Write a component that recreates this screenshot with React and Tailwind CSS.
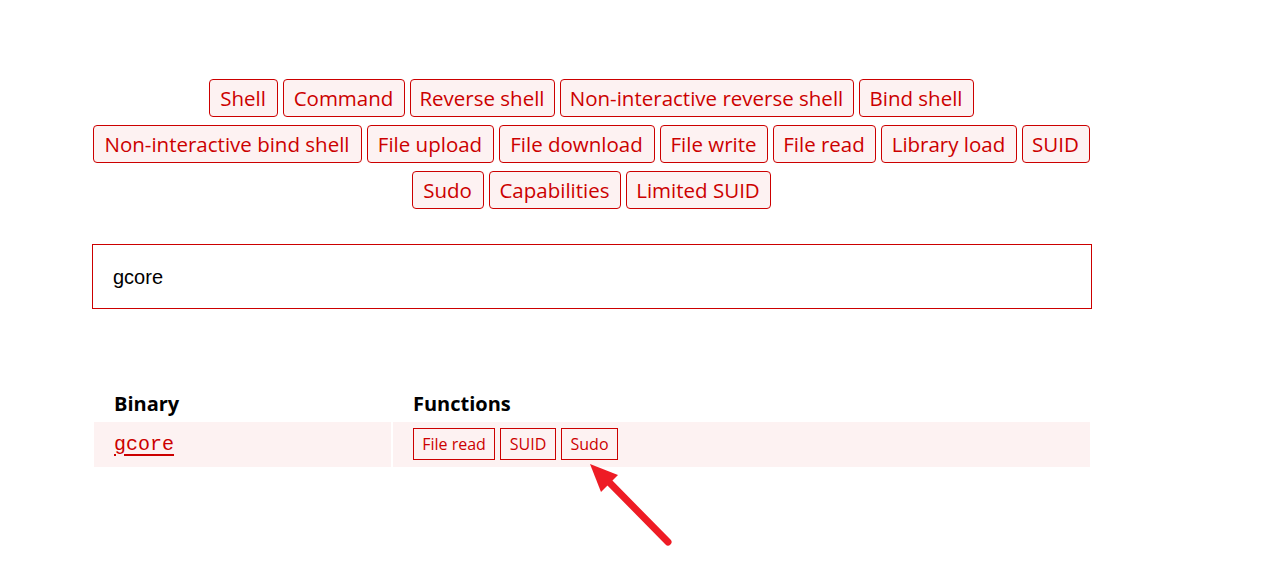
import React from "react";

const font = { fontFamily: '"Segoe UI", "Open Sans", "Noto Sans", sans-serif' };

const rows = [
  [["Shell", 69], ["Command", 122], ["Reverse shell", 145], ["Non-interactive reverse shell", 294], ["Bind shell", 115]],
  [["Non-interactive bind shell", 269], ["File upload", 127], ["File download", 156], ["File write", 108], ["File read", 103], ["Library load", 136], ["SUID", 68]],
  [["Sudo", 72], ["Capabilities", 132], ["Limited SUID", 145]],
];

function Chip({ label, w }) {
  return (
    <button
      className="h-[38px] rounded-[4px] border border-[#cc0000] bg-[#fdf2f2] text-[#cc0000] text-[20.5px] leading-none flex items-center justify-center whitespace-nowrap"
      style={{ width: w }}
    >
      {label}
    </button>
  );
}

export default function App() {
  return (
    <div className="relative min-h-[577px] bg-white" style={font}>
      <div className="ml-[92px] w-[1000px] pt-[79px]">
        <div className="flex flex-col gap-[8px] pr-[2px]">
          {rows.map((row, i) => (
            <div key={i} className="flex justify-center gap-[5px]">
              {row.map(([l, w]) => (
                <Chip key={l} label={l} w={w} />
              ))}
            </div>
          ))}
        </div>

        <div
          className="mt-[35px] h-[65px] border border-[#cc0000] flex items-center pl-[20px] text-[20px] text-black"
          style={{ fontFamily: '"Liberation Sans", Arial, sans-serif' }}
        >
          gcore
        </div>

        <div className="mt-[77px] grid grid-cols-[297px_697px] gap-[2px] p-[2px]">
          <div className="h-[32px] pl-[20px] flex items-center font-bold text-[20px] text-black">Binary</div>
          <div className="h-[32px] pl-[20px] flex items-center font-bold text-[20px] text-black">Functions</div>
          <div className="h-[45px] bg-[#fdf2f2] pl-[20px] flex items-center">
            <a
              href="#"
              className="text-[#cc0000] underline text-[20px] underline-offset-[4px]"
              style={{ fontFamily: '"Liberation Mono", "Courier New", monospace' }}
            >
              gcore
            </a>
          </div>
          <div className="h-[45px] bg-[#fdf2f2] pl-[20px] pb-[1px] flex items-center gap-[5px]">
            {[["File read", 82], ["SUID", 56], ["Sudo", 57]].map(([l, w]) => (
              <span
                key={l}
                className="h-[32px] border border-[#cc0000] text-[#cc0000] text-[16px] flex items-center justify-center whitespace-nowrap"
                style={{ width: w }}
              >
                {l}
              </span>
            ))}
          </div>
        </div>
      </div>

      <svg className="absolute left-0 top-0 pointer-events-none" width="1264" height="577">
        <line x1="668" y1="542" x2="605" y2="478" stroke="#ee1c25" strokeWidth="7" strokeLinecap="round" />
        <polygon points="590,464 618,475 601,492" fill="#ee1c25" />
      </svg>
    </div>
  );
}
